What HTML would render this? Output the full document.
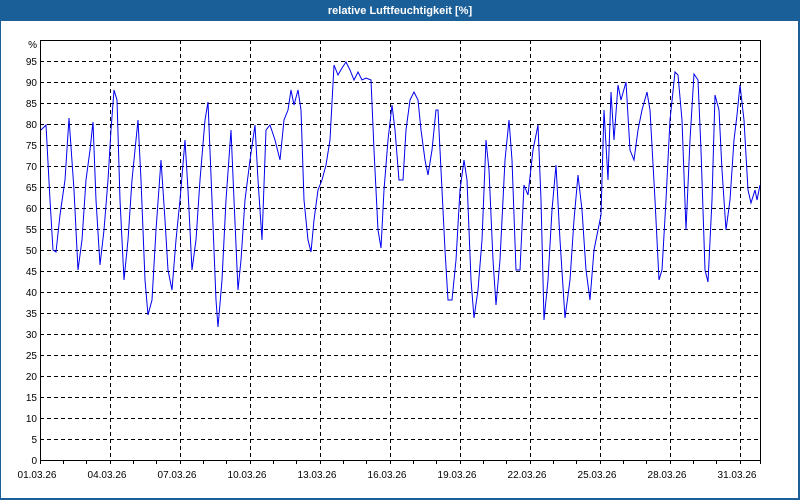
<!DOCTYPE html>
<html><head><style>
html,body{margin:0;padding:0;width:800px;height:500px;overflow:hidden;background:#fff;font-family:"Liberation Sans","DejaVu Sans",sans-serif}
</style></head><body>
<svg width="800" height="500" xmlns="http://www.w3.org/2000/svg" style="position:absolute;left:0;top:0">
<rect x="0" y="0" width="800" height="500" fill="#1b5f98"/>
<rect x="1" y="21" width="797" height="477" fill="#fff"/>
<text x="400" y="14" font-size="11" font-weight="bold" fill="#fff" text-anchor="middle" font-family="Liberation Sans, sans-serif">relative Luftfeuchtigkeit [%]</text>
<g stroke="#000" stroke-width="1" stroke-dasharray="4,3" fill="none">
<path d="M40 61.5H760M40 82.5H760M40 103.5H760M40 124.5H760M40 145.5H760M40 166.5H760M40 187.5H760M40 208.5H760M40 229.5H760M40 250.5H760M40 271.5H760M40 292.5H760M40 313.5H760M40 334.5H760M40 355.5H760M40 376.5H760M40 397.5H760M40 418.5H760M40 439.5H760"/>
<path d="M110.5 40V460M180.5 40V460M250.5 40V460M320.5 40V460M390.5 40V460M460.5 40V460M530.5 40V460M600.5 40V460M670.5 40V460M740.5 40V460"/>
</g>
<rect x="40.5" y="40.5" width="720" height="420" fill="none" stroke="#000"/>
<path stroke="#000" d="M63.5 460v4M86.5 460v4M110.5 460v4M133.5 460v4M156.5 460v4M180.5 460v4M203.5 460v4M226.5 460v4M250.5 460v4M273.5 460v4M296.5 460v4M320.5 460v4M343.5 460v4M366.5 460v4M390.5 460v4M413.5 460v4M436.5 460v4M460.5 460v4M483.5 460v4M506.5 460v4M530.5 460v4M553.5 460v4M576.5 460v4M600.5 460v4M623.5 460v4M646.5 460v4M670.5 460v4M693.5 460v4M716.5 460v4M740.5 460v4M760.5 460v4M40.5 460v4"/>
<g font-size="10" fill="#000" text-anchor="end" font-family="Liberation Sans, sans-serif">
<text x="37" y="48">%</text><text x="37" y="65">95</text><text x="37" y="86">90</text><text x="37" y="107">85</text><text x="37" y="128">80</text><text x="37" y="149">75</text><text x="37" y="170">70</text><text x="37" y="191">65</text><text x="37" y="212">60</text><text x="37" y="233">55</text><text x="37" y="254">50</text><text x="37" y="275">45</text><text x="37" y="296">40</text><text x="37" y="317">35</text><text x="37" y="338">30</text><text x="37" y="359">25</text><text x="37" y="380">20</text><text x="37" y="401">15</text><text x="37" y="422">10</text><text x="37" y="443">5</text><text x="37" y="464">0</text>
</g>
<g font-size="10" fill="#000" text-anchor="middle" font-family="Liberation Sans, sans-serif">
<text x="37" y="478">01.03.26</text><text x="107" y="478">04.03.26</text><text x="177" y="478">07.03.26</text><text x="247" y="478">10.03.26</text><text x="317" y="478">13.03.26</text><text x="387" y="478">16.03.26</text><text x="457" y="478">19.03.26</text><text x="527" y="478">22.03.26</text><text x="597" y="478">25.03.26</text><text x="667" y="478">28.03.26</text><text x="737" y="478">31.03.26</text>
</g>
<polyline fill="none" stroke="#0000ee" stroke-width="1" points="41,130 46,125 50,200 53,250 56,252 60,215 65,180 69,118 74,190 78,270 82,240 86,180 90,150 93,122 96,200 100,265 104,230 108,180 111,130 114,90 117,100 120,200 124,280 128,240 132,180 136,140 138,120 141,180 145,280 148,315 152,300 156,230 161,160 165,220 168,270 172,290 176,240 180,200 185,140 188,190 192,270 196,240 200,180 205,120 208,102 212,200 216,300 218,327 222,280 226,200 231,130 234,200 238,290 241,260 245,200 250,160 255,125 258,180 262,240 266,130 270,125 275,140 280,160 284,120 288,110 291,90 294,105 298,90 301,110 304,200 308,240 311,252 314,220 318,190 322,180 326,165 330,140 334,65 338,75 342,68 346,62 350,70 354,80 358,72 362,80 366,78 371,80 374,150 378,230 381,248 384,190 388,140 392,105 395,130 399,180 403,180 406,130 410,100 414,92 418,100 421,130 425,160 428,175 432,150 436,110 438,110 441,170 445,250 448,300 452,300 456,260 460,190 464,160 467,180 471,280 474,318 478,290 482,240 486,140 489,170 493,260 496,305 500,260 505,160 509,120 512,160 516,270 520,270 524,185 528,195 533,150 538,125 541,200 544,320 548,280 552,210 556,165 560,240 565,318 570,280 574,220 578,175 582,210 586,270 590,300 594,250 598,230 601,215 604,110 608,180 611,92 614,140 618,85 621,100 626,82 630,150 634,160 638,130 642,110 647,92 650,110 655,200 659,280 662,270 666,200 670,120 675,72 678,75 682,120 686,230 690,140 694,74 698,80 701,150 705,270 708,282 712,200 715,95 719,110 722,170 726,230 730,200 734,140 737,115 740,85 744,120 748,190 751,203 755,190 757,200 760,185"/>
</svg>
</body></html>
